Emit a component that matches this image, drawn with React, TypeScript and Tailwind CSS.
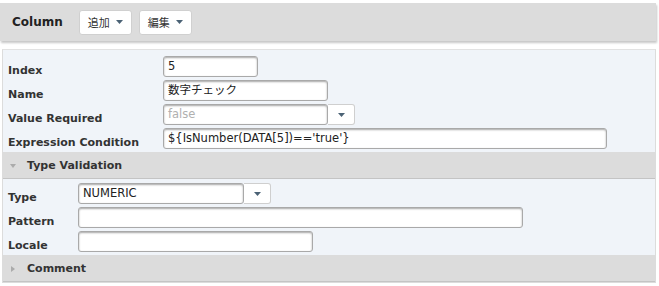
import React from "react";

const Caret = ({ color = "#4b6275" }: { color?: string }) => (
  <svg width="7" height="4" viewBox="0 0 7 4" className="block">
    <path d="M0 0 L7 0 L3.5 4 Z" fill={color} />
  </svg>
);

const HeaderButton = ({ label }: { label: string }) => (
  <div className="flex h-[25px] w-[53px] items-center justify-center gap-[6px] rounded-[3px] border border-[#d0d0d0] bg-white">
    <span className="text-[11px] leading-none text-[#333] font-['Noto_Sans_CJK_JP',sans-serif]">{label}</span>
    <Caret />
  </div>
);

const Input = ({
  w,
  value,
  muted,
  cjk,
}: {
  w: string;
  value?: string;
  muted?: boolean;
  cjk?: boolean;
}) => (
  <div
    className={`${w} flex h-[21px] items-center rounded-[3px] border border-[#a9a9a9] bg-white pl-[4px] shadow-[inset_0_1px_2px_rgba(0,0,0,0.35)] ${
      muted ? "text-[#b0b0b0]" : "text-[#222]"
    } ${cjk ? "text-[11.5px] font-['DejaVu_Sans','Noto_Sans_CJK_JP',sans-serif]" : "text-[11.5px]"} whitespace-nowrap leading-none`}
  >
    {value}
  </div>
);

const SelectBtn = () => (
  <div className="flex h-[21px] w-[27px] items-center justify-center rounded-r-[3px] border border-l-0 border-[#cfcfcf] bg-white">
    <Caret />
  </div>
);

const Row = ({ label, labelW, children }: { label: string; labelW: string; children: React.ReactNode }) => (
  <div className="flex h-[21px] items-start">
    <div className={`${labelW} shrink-0 pl-[5px] pt-[4px] text-[11px] font-bold leading-[21px] text-[#333]`}>{label}</div>
    <div className="flex">{children}</div>
  </div>
);

const Section = ({ title, open }: { title: string; open?: boolean }) => (
  <div className="flex h-[27px] items-center border-b border-[#c4c4c4] bg-[#dcdcdc] pl-[7px] pt-[2px]">
    <div className="flex w-[17px] items-center justify-start">
      {open ? (
        <svg width="6" height="4" viewBox="0 0 6 4">
          <path d="M0 0 L6 0 L3 4 Z" fill="#ababab" />
        </svg>
      ) : (
        <svg width="4" height="6" viewBox="0 0 4 6" className="ml-[1px]">
          <path d="M0 0 L4 3 L0 6 Z" fill="#ababab" />
        </svg>
      )}
    </div>
    <span className="text-[11px] font-bold text-[#333]">{title}</span>
  </div>
);

export default function App() {
  return (
    <div className="h-[286px] w-[659px] overflow-hidden bg-white pt-[3px] font-['DejaVu_Sans',sans-serif]">
      <div className="flex h-[38px] w-[656px] items-center bg-[#dcdcdc] pl-[12px] shadow-[1px_2px_2px_rgba(0,0,0,0.22)]">
        <span className="text-[12px] font-bold text-[#222]">Column</span>
        <div className="ml-[16px] flex gap-[7px]">
          <HeaderButton label="追加" />
          <HeaderButton label="編集" />
        </div>
      </div>

      <div className="ml-[2px] mt-[8px] w-[654px] border border-t-[#e2e2e2] border-[#dcdcdc] bg-[#f0f4f9]">
        <div className="flex flex-col gap-[3px] pb-[3px] pt-[6px]">
          <Row label="Index" labelW="w-[160px]">
            <Input w="w-[95px]" value="5" />
          </Row>
          <Row label="Name" labelW="w-[160px]">
            <Input w="w-[165px]" value="数字チェック" cjk />
          </Row>
          <Row label="Value Required" labelW="w-[160px]">
            <Input w="w-[165px]" value="false" muted />
            <SelectBtn />
          </Row>
          <Row label="Expression Condition" labelW="w-[160px]">
            <Input w="w-[444px]" value="${IsNumber(DATA[5])=='true'}" />
          </Row>
        </div>

        <Section title="Type Validation" open />

        <div className="flex flex-col gap-[3px] pb-[3px] pt-[4px]">
          <Row label="Type" labelW="w-[75px]">
            <Input w="w-[166px]" value="NUMERIC" />
            <SelectBtn />
          </Row>
          <Row label="Pattern" labelW="w-[75px]">
            <Input w="w-[445px]" />
          </Row>
          <Row label="Locale" labelW="w-[75px]">
            <Input w="w-[235px]" />
          </Row>
        </div>

        <Section title="Comment" />
      </div>
    </div>
  );
}
